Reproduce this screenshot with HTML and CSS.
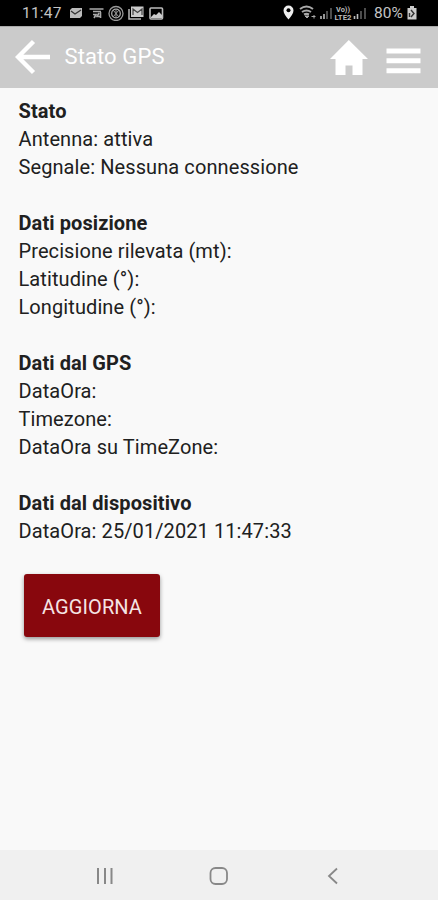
FILE: index.html
```
<!DOCTYPE html>
<html lang="it">
<head>
  <meta charset="UTF-8" />
  <meta name="viewport" content="width=device-width, initial-scale=1.0" />
  <title>Stato GPS</title>
  <link rel="stylesheet" href="styles.css">
</head>
<body>

<div class="statusbar">
  <span class="time">11:47</span>
  <svg class="notifications" width="96" height="16" viewBox="0 0 96 16">
    <!-- mail -->
    <path d="M1 5l2-2h10v8l-2 2H1z" fill="#bbb"/>
    <path d="M2 6l4 3 6-4" fill="none" stroke="#333" stroke-width="1.3"/>
    <!-- alert -->
    <path d="M20.500 4h14M24 6.500h8M24 9.500h3l-2 3.500M30 8l-2 3.500h4M31.500 7v6" fill="none" stroke="#aaa" stroke-width="1.6"/>
    <!-- sync -->
    <circle cx="47" cy="8.5" r="7" fill="none" stroke="#999" stroke-width="1.3"/>
    <circle cx="47" cy="8.5" r="4.3" fill="none" stroke="#aaa" stroke-width="1.3"/>
    <path d="M44 5l6 7M50 5l-6 7M47 5v7" stroke="#999"/>
    <!-- mails -->
    <path d="M60 4v10h12" fill="none" stroke="#bbb" stroke-width="1.5"/>
    <rect x="62" y="1.5" width="12.5" height="10.5" fill="#ccc"/>
    <path d="M64 10V4l4.500 3.500L73 4v6" fill="none" stroke="#444" stroke-width="1.2"/>
    <!-- picture -->
    <rect x="81" y="3" width="12.500" height="11" rx="1" fill="none" stroke="#bbb" stroke-width="1.6"/>
    <path d="M82 12l3-3 2 1 3-3 3 3v3H82z" fill="#ccc"/>
  </svg>
  <svg class="signals" width="86" height="16" viewBox="0 0 86 16">
    <!-- location -->
    <path d="M5.500 0.500a5 5 0 0 1 5 5c0 3-2.500 6-5 9-2.500-3-5-6-5-9a5 5 0 0 1 5-5z" fill="#eee"/>
    <circle cx="5.500" cy="5.300" r="2" fill="#000"/>
    <!-- wifi -->
    <path d="M17 4c4-3 9-3 13 0M19 7c3-2 6-2 9 0M21 9.500c2-1 3-1 5 0" fill="none" stroke="#aaa" stroke-width="2"/>
    <path d="M22 11h4l-2 2zM28.500 11.500h4M31 10v3.500" fill="#aaa" stroke="#aaa"/>
    <!-- first sim -->
    <path d="M38 11v3M41 9v5" stroke="#bbb" stroke-width="1.600"/>
    <path d="M44 6v8M48 3v11" stroke="#555" stroke-width="1.800"/>
    <text x="53" y="7" class="lte" textLength="14" lengthAdjust="spacingAndGlyphs">Vo))</text>
    <text x="51.500" y="14.500" class="lte" textLength="17" lengthAdjust="spacingAndGlyphs">LTE2</text>
    <!-- second sim -->
    <path d="M71.500 11v3M74.500 9v5" stroke="#bbb" stroke-width="1.600"/>
    <path d="M78 6v8M82 3v11" stroke="#555" stroke-width="1.800"/>
  </svg>
  <span class="percent">80%</span>
  <svg class="battery" width="10" height="14" viewBox="0 0 10 14">
    <path d="M3 0h4v2h2.500v11.500H0.500V2H3z" fill="#ccc"/>
    <path d="M4 4l3 3.500L4 11M2.500 7v4" fill="none" stroke="#333" stroke-width="1.400"/>
  </svg>
</div>

<header class="toolbar">
  <svg class="back" width="36" height="36" viewBox="0 0 36 36">
    <path d="M18.500 2.500L3 18l15.500 15.500M3 18h32" fill="none" stroke="#fff" stroke-width="4.400"/>
  </svg>
  <h1>Stato GPS</h1>
  <svg class="home" width="38" height="35" viewBox="0 0 38 35">
    <path d="M18.800 0L38 19h-5.500v16H22.500v-9.500h-7V35H5.500V19H0z" fill="#fff"/>
  </svg>
  <svg class="menu" width="35" height="26" viewBox="0 0 35 26">
    <path d="M0.500 0.500h34v5h-34zM0.500 10.200h34v5h-34zM0.500 20.200h34v5h-34z" fill="#fff"/>
  </svg>
</header>

<main class="content">
  <section>
    <h2>Stato</h2>
    <p>Antenna: attiva</p>
    <p>Segnale: Nessuna connessione</p>
  </section>

  <section>
    <h2>Dati posizione</h2>
    <p>Precisione rilevata (mt):</p>
    <p>Latitudine (°):</p>
    <p>Longitudine (°):</p>
  </section>

  <section>
    <h2>Dati dal GPS</h2>
    <p>DataOra:</p>
    <p>Timezone:</p>
    <p>DataOra su TimeZone:</p>
  </section>

  <section>
    <h2>Dati dal dispositivo</h2>
    <p>DataOra: 25/01/2021 11:47:33</p>
  </section>

  <button class="update">AGGIORNA</button>
</main>

<nav class="navbar">
  <svg width="18" height="18" viewBox="0 0 18 18">
    <path d="M2 1v16M9 1v16M15.500 1v16" stroke="#888" stroke-width="2"/>
  </svg>
  <svg width="20" height="20" viewBox="0 0 20 20">
    <rect x="1.500" y="2" width="16.500" height="16" rx="5" fill="none" stroke="#888" stroke-width="1.800"/>
  </svg>
  <svg width="18" height="18" viewBox="0 0 18 18">
    <path d="M13 1.500L5 9l8 7.500" fill="none" stroke="#888" stroke-width="1.800"/>
  </svg>
</nav>

</body>
</html>
```
FILE: styles.css
```
* {
  box-sizing: border-box;
}

body {
  margin: 0;
  height: 900px;
  display: flex;
  flex-direction: column;
  font-family: Roboto, sans-serif;
  background: #f9f9f9;
  color: #202020;
}

h1, h2, p {
  margin: 0;
}

.statusbar {
  height: 26px;
  display: flex;
  align-items: center;
  padding: 0 21px 0 22px;
  background: #000;
  color: #c4c4c4;
  font-size: 15.5px;
}

.time {
  width: 47px;
  letter-spacing: 0.2px;
}

.signals {
  margin-left: auto;
}

.lte {
  font-size: 8px;
  font-weight: bold;
  fill: #bbb;
}

.percent {
  width: 30px;
  margin: 0 3px 0 5px;
}

.toolbar {
  height: 62px;
  display: flex;
  align-items: center;
  padding: 0 17px 0 15px;
  background: #cbcbcb;
  border-top: 1px solid #aaa;
}

.back {
  margin-bottom: 1px;
}

.toolbar h1 {
  margin-left: 13.5px;
  padding-bottom: 2px;
  color: #fff;
  font-size: 22px;
  font-weight: normal;
  letter-spacing: 0.1px;
}

.home {
  margin-left: auto;
  margin-right: 18px;
}

.menu {
  margin-top: 6px;
}

.content {
  flex: 1;
  padding: 9px 18.5px;
  font-size: 20px;
  line-height: 28px;
  letter-spacing: 0.09px;
}

section {
  margin-bottom: 28px;
}

h2 {
  font-size: 20px;
  font-weight: bold;
}

.update {
  display: block;
  width: 136px;
  height: 63px;
  margin: 29px 0 0 5.5px;
  padding: 2px 0 0;
  border: none;
  border-radius: 3px;
  background: #88070d;
  box-shadow: 0 2px 4px rgba(0, 0, 0, 0.4);
  color: #f5e4e4;
  font-family: inherit;
  font-size: 20px;
  letter-spacing: 0.1px;
}

.navbar {
  height: 50px;
  display: flex;
  align-items: center;
  justify-content: space-between;
  padding: 2px 96px 0;
  background: #f0f0f0;
}
```
